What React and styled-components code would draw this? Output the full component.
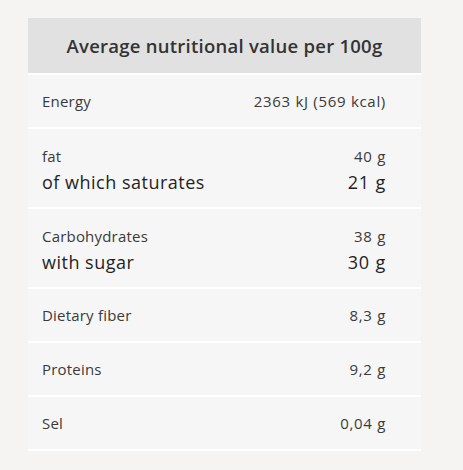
import React from "react";
import styled, { createGlobalStyle } from "styled-components";

const GlobalStyle = createGlobalStyle`
  html, body {
    margin: 0;
    padding: 0;
    background: #f5f4f2;
  }
  body {
    font-family: "Open Sans", "Noto Sans", sans-serif;
    color: #333;
  }
`;

const rows = [
  { label: "Energy", value: "2363 kJ (569 kcal)" },
  { label: "fat", value: "40 g", sub: { label: "of which saturates", value: "21 g" } },
  { label: "Carbohydrates", value: "38 g", sub: { label: "with sugar", value: "30 g" } },
  { label: "Dietary fiber", value: "8,3 g" },
  { label: "Proteins", value: "9,2 g" },
  { label: "Sel", value: "0,04 g" },
];

const App = () => {
  return (
    <Page>
      <GlobalStyle />
      <Table>
        <Header>Average nutritional value per 100g</Header>
        {rows.map((row) => (
          <Row key={row.label} $tall={!!row.sub}>
            <Line>
              <Label>{row.label}</Label>
              <Value>{row.value}</Value>
            </Line>
            {row.sub && (
              <Line>
                <Label $big>{row.sub.label}</Label>
                <Value $big>{row.sub.value}</Value>
              </Line>
            )}
          </Row>
        ))}
      </Table>
    </Page>
  );
};

const Page = styled.div`
  width: 463px;
  height: 470px;
  padding: 18px 42px 0 28px;
  box-sizing: border-box;
`;

const Table = styled.div`
  width: 393px;
  display: flex;
  flex-direction: column;
`;

const Header = styled.div`
  height: 55px;
  background: #e1e1e1;
  display: flex;
  align-items: center;
  justify-content: center;
  font-size: 18.5px;
  font-weight: 600;
  letter-spacing: 0.25px;
  color: #333;
  border-bottom: 2px solid #fff;
`;

const Row = styled.div`
  background: #f6f6f6;
  border-bottom: 2px solid #fff;
  box-sizing: border-box;
  padding: ${(p) => (p.$tall ? "17px 35px 0 14px" : "0 35px 0 14px")};
  height: ${(p) => (p.$tall ? "80px" : "54px")};
  display: flex;
  flex-direction: column;
  justify-content: ${(p) => (p.$tall ? "flex-start" : "center")};
  gap: 4px;
`;

const Line = styled.div`
  display: flex;
  justify-content: space-between;
  align-items: center;
`;

const Label = styled.span`
  font-size: ${(p) => (p.$big ? "18px" : "15px")};
  line-height: ${(p) => (p.$big ? "24px" : "20px")};
  letter-spacing: ${(p) => (p.$big ? "0.5px" : "0.2px")};
  color: ${(p) => (p.$big ? "#1f1f1f" : "#3a3a3a")};
`;

const Value = styled(Label)`
  letter-spacing: ${(p) => (p.$big ? "0.8px" : "0.7px")};
`;

export default App;
